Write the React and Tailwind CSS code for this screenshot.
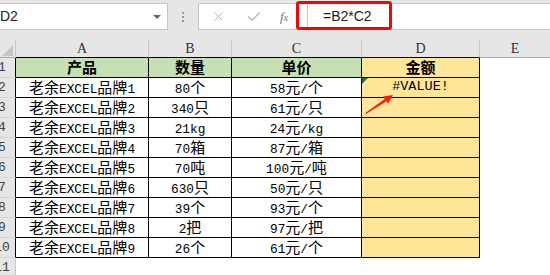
import { X, Check } from 'lucide-react'

const ROWS = [
  ['老余EXCEL品牌1', '80个', '58元/个'],
  ['老余EXCEL品牌2', '340只', '61元/只'],
  ['老余EXCEL品牌3', '21kg', '24元/kg'],
  ['老余EXCEL品牌4', '70箱', '87元/箱'],
  ['老余EXCEL品牌5', '70吨', '100元/吨'],
  ['老余EXCEL品牌6', '630只', '50元/只'],
  ['老余EXCEL品牌7', '39个', '93元/个'],
  ['老余EXCEL品牌8', '2把', '97元/把'],
  ['老余EXCEL品牌9', '26个', '61元/个'],
]

// ascii runs get a narrow mono face, like SimSun half-width glyphs
function Mixed({ text }) {
  const parts = text.match(/[\x00-\x7f]+|[^\x00-\x7f]+/g) ?? []
  return (
    <span className="leading-none">
      {parts.map((p, i) =>
        /[\x00-\x7f]/.test(p[0])
          ? <span key={i} className="font-['Liberation_Mono',monospace] text-[12.8px]">{p}</span>
          : <span key={i}>{p}</span>
      )}
    </span>
  )
}

function RowHead({ n }) {
  return (
    <div className="h-[20px] bg-[#e6e6e6] border-r border-black border-b border-b-[#d4d4d4] overflow-hidden flex items-center">
      <div className="w-[20px] ml-[-8px] shrink-0 text-center text-[13px] text-[#444] font-['Liberation_Mono',monospace]">{n}</div>
    </div>
  )
}

function ColHead({ label, last }) {
  return (
    <div className={`h-[18px] bg-[#e6e6e6] flex items-center justify-center text-[14px] text-[#333] font-['Liberation_Serif',serif] ${last ? 'border-b border-[#ababab]' : 'border-r border-r-[#c8c8c8] border-b border-b-black'}`}>
      {label}
    </div>
  )
}

export default function App() {
  return (
    <div className="relative w-[550px] h-[275px] overflow-hidden bg-white font-['Noto_Sans_CJK_SC',sans-serif] text-black">
      {/* formula bar */}
      <div className="h-[40px] bg-[#e6e6e6] flex items-start pt-[3px]">
        <div className="w-[169px] ml-[-1px] h-[27px] bg-white border border-[#c6c6c6] flex items-center justify-between pr-[6px]">
          <span className="text-[14px] text-[#222] font-['Liberation_Sans',sans-serif]">D2</span>
          <span className="w-0 h-0 border-l-[4px] border-r-[4px] border-t-[4px] border-l-transparent border-r-transparent border-t-[#666]"></span>
        </div>
        <div className="w-[30px] h-[27px] flex flex-col items-center justify-center gap-[2px]">
          <span className="w-[2px] h-[2px] bg-[#999]"></span>
          <span className="w-[2px] h-[2px] bg-[#999]"></span>
          <span className="w-[2px] h-[2px] bg-[#999]"></span>
        </div>
        <div className="flex-1 h-[27px] bg-white border border-[#c6c6c6] border-r-0 flex items-center">
          <div className="w-[108px] flex items-center pl-[12px] gap-[20px] text-[#b4b4b4]">
            <X size={15} strokeWidth={1.5} />
            <Check size={16} strokeWidth={2} />
            <span className="italic text-[13px] text-[#777] font-['Liberation_Serif',serif] ml-[-2px]">f<span className="text-[10px]">x</span></span>
          </div>
          <div className="w-px h-full bg-[#c6c6c6]"></div>
          <span className="ml-[15px] text-[14px] text-[#222] font-['Liberation_Sans',sans-serif]">=B2*C2</span>
        </div>
      </div>

      {/* sheet */}
      <div className="grid grid-cols-[16px_133px_83px_130px_118px_1fr]">
        <div className="h-[18px] bg-[#e6e6e6] border-r border-r-[#c8c8c8] border-b border-b-[#ababab]">
          <svg width="16" height="18" className="block">
            <polygon points="2,16 13,16 13,5" fill="#c6c6c6" />
          </svg>
        </div>
        <ColHead label="A" />
        <ColHead label="B" />
        <ColHead label="C" />
        <ColHead label="D" />
        <ColHead label="E" last />

        <RowHead n={1} />
        {['产品', '数量', '单价'].map(h => (
          <div key={h} className="h-[20px] bg-[#c6e0b4] border-r border-b border-black flex items-center justify-center text-[15px] font-bold">{h}</div>
        ))}
        <div className="h-[20px] bg-[#ffe699] border-r border-b border-black flex items-center justify-center text-[15px] font-bold">金额</div>
        <div className="h-[20px]"></div>

        {ROWS.map((r, i) => (
          <div key={i} className="contents">
            <RowHead n={i + 2} />
            {r.map((c, j) => (
              <div key={j} className="h-[20px] border-r border-b border-black flex items-center justify-center text-[15px] whitespace-nowrap">
                <Mixed text={c} />
              </div>
            ))}
            <div className="h-[20px] bg-[#ffe699] border-r border-b border-black flex items-center justify-center relative">
              {i === 0 && (
                <>
                  <span className="absolute left-0 top-0 w-0 h-0 border-t-[6px] border-r-[6px] border-t-[#1e7b3c] border-r-transparent"></span>
                  <span className="font-['Liberation_Mono',monospace] text-[13.5px]">#VALUE!</span>
                </>
              )}
            </div>
            <div className="h-[20px]"></div>
          </div>
        ))}

        <div className="h-[20px] bg-[#e6e6e6] border-r border-[#c8c8c8] overflow-hidden flex items-center">
          <div className="w-[20px] ml-[-8px] shrink-0 text-center text-[13px] text-[#444] font-['Liberation_Mono',monospace]">11</div>
        </div>
      </div>

      {/* annotations */}
      <div className="absolute left-[296px] top-[1px] w-[96px] h-[29px] border-[3px] border-[#ff0000] rounded-[3px]"></div>
      <svg className="absolute left-[360px] top-[90px]" width="40" height="30">
        <polygon points="6,24 26.5,11.3 28.2,13.8 33,5 23,6.4 24.7,8.9 5.4,23" fill="#f02018" />
      </svg>
    </div>
  )
}
